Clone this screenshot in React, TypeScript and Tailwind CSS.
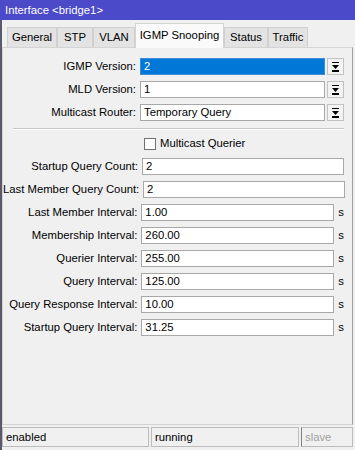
import React from 'react';

const FONT = { fontFamily: '"Liberation Sans", Arial, sans-serif' };

function DropArrow() {
  return (
    <svg width="9" height="10" viewBox="0 0 9 10">
      <rect x="1" y="0" width="7" height="1" fill="#000" />
      <path d="M1 3 H8 L4.5 7 Z" fill="#000" />
      <rect x="1" y="8" width="7" height="2" fill="#000" />
    </svg>
  );
}

function Select({ value, active }: { value: string; active?: boolean }) {
  return (
    <div className="flex items-center gap-[2px]">
      <div
        className={`h-[17px] w-[185px] flex items-center px-[3px] border ${
          active ? 'bg-[#0078d7] text-white border-[#3c8fd6]' : 'bg-white text-black border-[#a8a8a8]'
        }`}
      >
        {value}
      </div>
      <div className="h-[17px] w-[17px] flex items-center justify-center border border-[#c2c2c2] bg-[#f3f3f3]">
        <DropArrow />
      </div>
    </div>
  );
}

function Row({ label, children }: { label: string; children: React.ReactNode }) {
  return (
    <div className="flex items-center h-[17px]">
      <div className="w-[140px] text-right pr-[4px] whitespace-nowrap">{label}:</div>
      {children}
    </div>
  );
}

function Field({ value, unit }: { value: string; unit?: boolean }) {
  return (
    <div className="flex items-center">
      <div
        className={`h-[17px] ${unit ? 'w-[193px]' : 'w-[202px]'} bg-white border border-[#a8a8a8] flex items-center px-[3px]`}
      >
        {value}
      </div>
      {unit && <span className="ml-[4px]">s</span>}
    </div>
  );
}

const tabs = [
  { t: 'General', w: 'w-[50px]' },
  { t: 'STP', w: 'w-[36px]' },
  { t: 'VLAN', w: 'w-[42px]' },
  { t: 'IGMP Snooping', w: 'w-[89px]' },
  { t: 'Status', w: 'w-[44px]' },
  { t: 'Traffic', w: 'w-[40px]' },
];

export default function App() {
  return (
    <div className="w-[355px] h-[450px] bg-[#f0f0f0] text-[11.3px] text-black flex flex-col overflow-hidden" style={FONT}>
      <div className="h-[20px] shrink-0 bg-[#4b4ac9] text-white flex items-center pl-[5px]">
        Interface &lt;bridge1&gt;
      </div>
      <div className="flex-1 flex flex-col border-l-2 border-[#5a5a6a]">
        <div className="h-[27px] shrink-0 flex items-end pl-[5px]">
          {tabs.map(({ t, w }) => {
            const on = t === 'IGMP Snooping';
            return (
              <div
                key={t}
                className={`${w} whitespace-nowrap flex items-center justify-center border border-b-0 ${
                  on
                    ? 'h-[25px] bg-[#fafafa] border-[#d4d4d4] relative top-[1px] pb-[2px]'
                    : 'h-[20px] bg-[#e3e3e3] border-[#d0d0d0]'
                }`}
              >
                {t}
              </div>
            );
          })}
        </div>
        <div className="h-[378px] mr-[2px] border border-[#d4d4d4] border-r-[#a0a0a0] bg-[#f0f0f0] pt-[10px] pr-[8px] flex flex-col">
          <div className="flex flex-col gap-[6px]">
            <Row label="IGMP Version">
              <Select value="2" active />
            </Row>
            <Row label="MLD Version">
              <Select value="1" />
            </Row>
            <Row label="Multicast Router">
              <Select value="Temporary Query" />
            </Row>
          </div>
          <div className="ml-[10px] mt-[7px] h-[2px] border-t border-[#c8c8c8] border-b border-b-white" />
          <div className="flex items-center mt-[7px] pl-[141px] h-[13px]">
            <div className="w-[12px] h-[12px] bg-white border border-[#707070]" />
            <span className="ml-[4px]">Multicast Querier</span>
          </div>
          <div className="flex flex-col gap-[6px] mt-[8px]">
            <Row label="Startup Query Count">
              <Field value="2" />
            </Row>
            <Row label="Last Member Query Count">
              <Field value="2" />
            </Row>
            <Row label="Last Member Interval">
              <Field value="1.00" unit />
            </Row>
            <Row label="Membership Interval">
              <Field value="260.00" unit />
            </Row>
            <Row label="Querier Interval">
              <Field value="255.00" unit />
            </Row>
            <Row label="Query Interval">
              <Field value="125.00" unit />
            </Row>
            <Row label="Query Response Interval">
              <Field value="10.00" unit />
            </Row>
            <Row label="Startup Query Interval">
              <Field value="31.25" unit />
            </Row>
          </div>
        </div>
        <div className="flex gap-[2px] mt-[2px] mr-[2px] h-[20px]">
          <div className="w-[147px] border border-[#bcbcbc] flex items-center pl-[3px]">enabled</div>
          <div className="w-[148px] border border-[#bcbcbc] flex items-center pl-[3px]">running</div>
          <div className="flex-1 border border-[#bcbcbc] border-l-[#808080] flex items-center pl-[3px] text-[#a0a0a0]">slave</div>
        </div>
      </div>
    </div>
  );
}
